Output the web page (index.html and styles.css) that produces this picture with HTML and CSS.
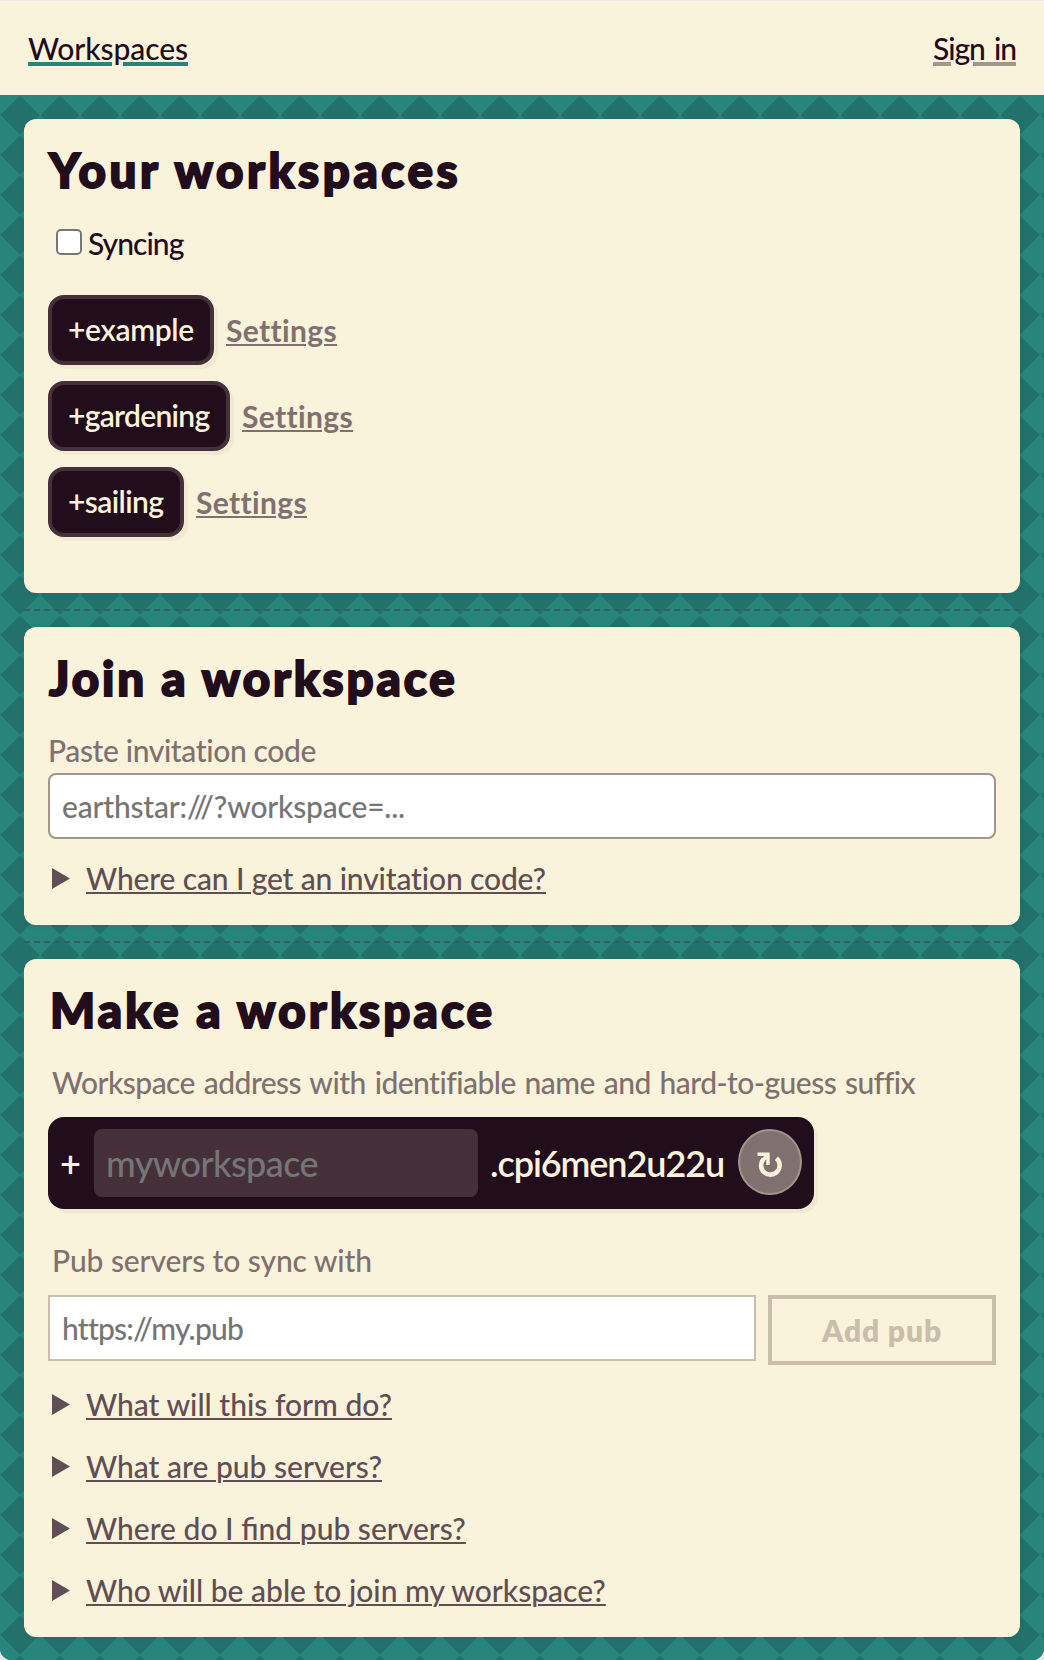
FILE: index.html
```html
<!DOCTYPE html>
<html lang="en">
<head>
<meta charset="utf-8">
<title>Workspaces</title>
<link rel="stylesheet" href="styles.css">
</head>
<body>
<div class="window">
  <header class="topbar">
    <a class="nav-link nav-current">Workspaces</a>
    <a class="nav-link nav-signin">Sign in</a>
  </header>
  <main class="page">
    <section class="card card-yours">
      <h1 class="title title-yours">Your workspaces</h1>
      <label class="sync"><input class="sync-box" type="checkbox"><span>Syncing</span></label>
      <ul class="spaces">
        <li class="space"><a class="pill pill-example">+example</a><a class="settings">Settings</a></li>
        <li class="space"><a class="pill pill-gardening">+gardening</a><a class="settings">Settings</a></li>
        <li class="space"><a class="pill pill-sailing">+sailing</a><a class="settings">Settings</a></li>
      </ul>
    </section>
    <div class="divider"></div>
    <section class="card">
      <h1 class="title title-join">Join a workspace</h1>
      <label class="label label-join" for="code">Paste invitation code</label>
      <input class="field field-code" id="code" placeholder="earthstar:///?workspace=...">
      <details class="faq"><summary class="question question-code"><span class="question-text">Where can I get an invitation code?</span></summary></details>
    </section>
    <div class="divider"></div>
    <section class="card">
      <h1 class="title title-make">Make a workspace</h1>
      <label class="label label-address" for="name">Workspace address with identifiable name and hard-to-guess suffix</label>
      <div class="address">
        <span class="plus">+</span>
        <input class="name" id="name" placeholder="myworkspace">
        <span class="suffix">.cpi6men2u22u</span>
        <button class="reroll" aria-label="New suffix">
          <svg class="reroll-icon" viewBox="0 0 26 26" width="26" height="26">
            <path d="M19.4 6.2A9.3 9.3 0 1 1 6.2 7.4" fill="none" stroke="currentColor" stroke-width="4.6"/>
            <path d="M0.5 2.2H11V13" fill="none" stroke="currentColor" stroke-width="3.4"/>
            <path d="M5.2 8.6L10.8 3.4" fill="none" stroke="currentColor" stroke-width="3.6"/>
          </svg>
        </button>
      </div>
      <label class="label label-pubs" for="pub">Pub servers to sync with</label>
      <div class="pub-row">
        <input class="field field-pub" id="pub" placeholder="https://my.pub">
        <button class="add" disabled>Add pub</button>
      </div>
      <div class="faq faq-list">
        <details><summary class="question"><span class="question-text">What will this form do?</span></summary></details>
        <details><summary class="question"><span class="question-text">What are pub servers?</span></summary></details>
        <details><summary class="question"><span class="question-text">Where do I find pub servers?</span></summary></details>
        <details><summary class="question"><span class="question-text">Who will be able to join my workspace?</span></summary></details>
      </div>
    </section>
  </main>
</div>
</body>
</html>
```
FILE: styles.css
```css
:root {
  --cream: #faf3db;
  --ink: #220d1d;
  --ink-80: #45303a;
  --ink-70: #614e54;
  --ink-50: #80706f;
  --ink-30: #a2958b;
  --ink-20: #c9beac;
  --teal: #27857b;
  --teal-dark: #23716b;
}

* {
  box-sizing: border-box;
}

body {
  margin: 0;
  background: #e9e9ec;
  color: var(--ink);
  font: 500 30px/36px Lato, sans-serif;
}

input,
button {
  margin: 0;
  font: inherit;
}

.window {
  height: 1660px;
  overflow: hidden;
  border-radius: 0 0 12px 12px;
  background: var(--teal);
}

.topbar {
  display: flex;
  justify-content: space-between;
  align-items: center;
  height: 95px;
  padding: 0 28px;
  border-top: 1px solid #ebebeb;
  background: var(--cream);
}

.nav-link {
  text-decoration: underline 4px;
  text-underline-offset: 2px;
}

.nav-current {
  text-decoration-color: var(--teal);
  letter-spacing: -0.09px;
}

.nav-signin {
  text-decoration-color: var(--ink-30);
  letter-spacing: -1.1px;
  word-spacing: 3px;
}

.page {
  height: 1565px;
  padding: 24px;
  background-color: var(--teal-dark);
  background-image:
    linear-gradient(45deg, var(--teal) 25%, transparent 25.6%, transparent 74.4%, var(--teal) 75%),
    linear-gradient(-45deg, var(--teal) 25%, transparent 25.6%, transparent 74.4%, var(--teal) 75%);
  background-size: 40px 40px;
}

.card {
  display: flex;
  flex-direction: column;
  align-items: flex-start;
  padding: 24px 24px 30px;
  border-radius: 12px;
  background: var(--cream);
  box-shadow: 0 1px 6px rgba(34, 13, 29, 0.05);
}

.card-yours {
  padding-bottom: 56px;
}

.divider {
  height: 34px;
  padding: 16px 0;
  background: repeating-linear-gradient(90deg, #315f63 0 6px, transparent 6px 10px) content-box;
}

.title {
  margin: 0;
  padding: 1px 0 0 1px;
  font-size: 47.5px;
  font-weight: 900;
  line-height: 51px;
  white-space: nowrap;
  -webkit-text-stroke: 2px var(--ink);
}

.title-yours {
  letter-spacing: 3.6px;
}

.title-join {
  letter-spacing: 2.9px;
}

.title-make {
  padding-left: 2px;
  letter-spacing: 3.15px;
}

.sync {
  display: flex;
  align-items: center;
  gap: 6px;
  margin: 30px 0 34px;
  padding-left: 8px;
  letter-spacing: -0.95px;
}

.sync-box {
  width: 26px;
  height: 26px;
  margin-top: -3px;
  border: 2px solid #767676;
  border-radius: 5px;
  background: #fff;
  appearance: none;
}

.spaces {
  display: grid;
  gap: 16px;
  margin: 0;
  padding: 0;
  list-style: none;
}

.space {
  display: flex;
  align-items: center;
  gap: 12px;
}

.pill {
  height: 70px;
  padding: 12px 16px;
  border: 4px solid var(--ink-80);
  border-radius: 16px;
  background: var(--ink);
  box-shadow: 4px 4px 0 #f2e9d2;
  color: var(--cream);
  font-weight: 600;
}

.pill-example {
  width: 166px;
  letter-spacing: -0.34px;
}

.pill-gardening {
  width: 182px;
  letter-spacing: -0.7px;
}

.pill-sailing {
  width: 136px;
  letter-spacing: -0.6px;
}

.settings {
  margin-top: -1px;
  color: var(--ink-50);
  font-weight: 700;
  letter-spacing: 0.35px;
  text-decoration: underline 2px;
  text-underline-offset: 2px;
}

.label {
  position: relative;
  top: 1px;
  margin-top: 28px;
  color: var(--ink-50);
  white-space: nowrap;
}

.label-join {
  letter-spacing: -0.37px;
}

.label-address {
  padding-left: 4px;
  letter-spacing: -0.54px;
  word-spacing: 1.8px;
}

.label-pubs {
  margin-top: 32px;
  padding-left: 4px;
  letter-spacing: -0.09px;
}

.field {
  height: 66px;
  padding: 0 12px;
  border: 2px solid var(--ink-30);
  background: #fff;
}

.field::placeholder,
.name::placeholder {
  color: #757575;
}

.field-code {
  width: 100%;
  margin-top: 6px;
  border-radius: 8px;
  letter-spacing: -0.2px;
}

.field-pub {
  flex: 1;
  min-width: 0;
  border-color: var(--ink-20);
  letter-spacing: -0.78px;
}

.faq {
  margin-top: 20px;
}

.faq-list {
  display: grid;
  gap: 26px;
}

.question {
  display: flex;
  align-items: center;
  padding-left: 4px;
  color: var(--ink-70);
  list-style: none;
}

.question::before {
  width: 18px;
  height: 21px;
  margin: 3px 16px 0 0;
  background: currentColor;
  clip-path: polygon(0 0, 100% 50%, 0 100%);
  content: "";
}

.question-text {
  position: relative;
  top: 1px;
  text-decoration: underline 2px;
  text-underline-offset: 2px;
}

.question-code {
  letter-spacing: -0.14px;
}

.address {
  display: flex;
  align-items: center;
  width: 766px;
  height: 92px;
  margin-top: 18px;
  padding: 12px;
  border-radius: 16px;
  background: var(--ink);
  box-shadow: 4px 4px 0 #f2e9d2;
  color: var(--cream);
  font-size: 36px;
}

.plus {
  width: 34px;
  font-weight: 600;
}

.name {
  width: 384px;
  height: 68px;
  padding: 0 12px;
  border: 0;
  border-radius: 8px;
  background: var(--ink-80);
  letter-spacing: -0.55px;
}

.suffix {
  flex: 1;
  padding-left: 12px;
  font-weight: 600;
  letter-spacing: -1.08px;
}

.reroll {
  display: grid;
  place-items: center;
  width: 64px;
  height: 66px;
  margin-bottom: 2px;
  padding: 0;
  border: 2px solid var(--ink-30);
  border-radius: 50%;
  background: var(--ink-50);
  color: var(--cream);
}

.reroll-icon {
  margin-top: 5px;
}

.pub-row {
  display: flex;
  align-items: flex-start;
  gap: 12px;
  width: 100%;
  margin-top: 18px;
}

.add {
  width: 228px;
  height: 70px;
  padding: 0 0 1px;
  border: 4px solid var(--ink-20);
  background: transparent;
  color: var(--ink-20);
  font-weight: 800;
  letter-spacing: 0.85px;
}
```
